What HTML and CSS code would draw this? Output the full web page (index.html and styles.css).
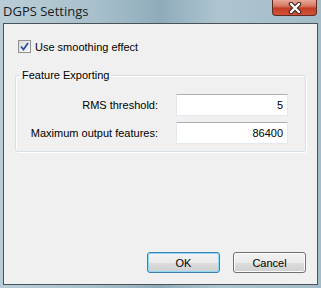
FILE: index.html
```html
<!DOCTYPE html>
<html lang="en">
<head>
    <meta charset="UTF-8">
    <title>DGPS Settings</title>
    <link rel="stylesheet" href="styles.css">
</head>
<body>
    <div class="window">
        <div class="titlebar">
            <span class="title">DGPS Settings</span>
            <button class="close-button">
                <svg width="16" height="12" viewBox="0 0 16 12">
                    <path d="M4 2 L12 10 M12 2 L4 10" stroke="#3a2a28" stroke-width="4.5" stroke-linecap="round"/>
                    <path d="M4 2 L12 10 M12 2 L4 10" stroke="#ffffff" stroke-width="2.4" stroke-linecap="round"/>
                </svg>
            </button>
        </div>
        <div class="client">
            <label class="check-row">
                <span class="checkbox">
                    <svg width="9" height="9" viewBox="0 0 9 9">
                        <path d="M1 4.5 L3.5 7.5 L8 1" fill="none" stroke="#2a4db4" stroke-width="1.8"/>
                    </svg>
                </span>
                Use smoothing effect
            </label>

            <fieldset class="group">
                <legend>Feature Exporting</legend>
                <div class="form-grid">
                    <label class="field-label">RMS threshold:</label>
                    <input class="field-input" type="text" value="5">
                    <label class="field-label">Maximum output features:</label>
                    <input class="field-input" type="text" value="86400">
                </div>
            </fieldset>

            <div class="dialog-buttons">
                <button class="btn btn-default">OK</button>
                <button class="btn">Cancel</button>
            </div>
        </div>
    </div>
</body>
</html>
```

FILE: styles.css
```css
body {
    margin: 0;
    font-family: "Liberation Sans", Arial, sans-serif;
    font-size: 11px;
    color: #000;
}

.window {
    width: 321px;
    height: 288px;
    box-sizing: border-box;
    display: flex;
    flex-direction: column;
    background: linear-gradient(90deg, #b9cdd7 0%, #a8c0cc 30%, #8fabba 50%, #aec5d0 68%, #a3bcc8 100%);
}

.titlebar {
    height: 23px;
    display: flex;
    align-items: flex-start;
    justify-content: space-between;
}

.title {
    margin: 2px 0 0 3px;
    font-family: "Open Sans", sans-serif;
    font-size: 13px;
    color: #1c1c1c;
}

.close-button {
    width: 45px;
    height: 16px;
    margin-right: 4px;
    padding: 0;
    border: 1px solid #5e2a22;
    border-top: none;
    border-radius: 0 0 4px 4px;
    background: linear-gradient(180deg, #e8a797 0%, #d67a62 40%, #c33d25 55%, #d5533a 100%);
    display: flex;
    align-items: center;
    justify-content: center;
}

.client {
    flex: 1;
    margin: 0 3px 3px 3px;
    border: 1px solid #48545a;
    background-color: #f0f0f0;
    display: flex;
    flex-direction: column;
}

.check-row {
    display: flex;
    align-items: center;
    margin: 16px 0 0 14px;
    color: #000;
}

.checkbox {
    width: 11px;
    height: 11px;
    border: 1px solid #8f8f8f;
    background: linear-gradient(135deg, #dcdcdc, #f8f8f8);
    margin-right: 4px;
    display: flex;
    align-items: center;
    justify-content: center;
}

.group {
    margin: 15px 11px 0 11px;
    padding: 12px 17px 7px 0;
    border: 1px solid #d5dfe5;
    border-radius: 3px;
    box-shadow: inset 1px 1px 0 #fff, 1px 1px 0 #fff;
}

.group legend {
    padding: 0 2px;
    margin-left: 4px;
    line-height: 14px;
}

.form-grid {
    display: grid;
    grid-template-columns: 1fr 112px;
    column-gap: 18px;
    row-gap: 6px;
    align-items: center;
}

.field-label {
    text-align: right;
}

.field-input {
    height: 22px;
    box-sizing: border-box;
    border: 1px solid #e3e9ef;
    border-top-color: #abadb3;
    background: white;
    text-align: right;
    padding: 0 4px;
    font-family: "Liberation Sans", Arial, sans-serif;
    font-size: 11px;
    color: #000;
}

.dialog-buttons {
    margin-top: auto;
    display: flex;
    justify-content: flex-end;
    gap: 13px;
    padding: 0 11px 11px 0;
}

.btn {
    width: 73px;
    height: 21px;
    padding: 0;
    border: 1px solid #707070;
    border-radius: 3px;
    background: linear-gradient(180deg, #f2f2f2 0%, #ebebeb 50%, #dddddd 51%, #cfcfcf 100%);
    font-family: "Liberation Sans", Arial, sans-serif;
    font-size: 11px;
    color: #000;
    box-shadow: inset 0 0 0 1px #fcfcfc;
}

.btn-default {
    border-color: #3c7fb1;
    box-shadow: inset 0 0 0 1px #8fd8f8;
}
```
